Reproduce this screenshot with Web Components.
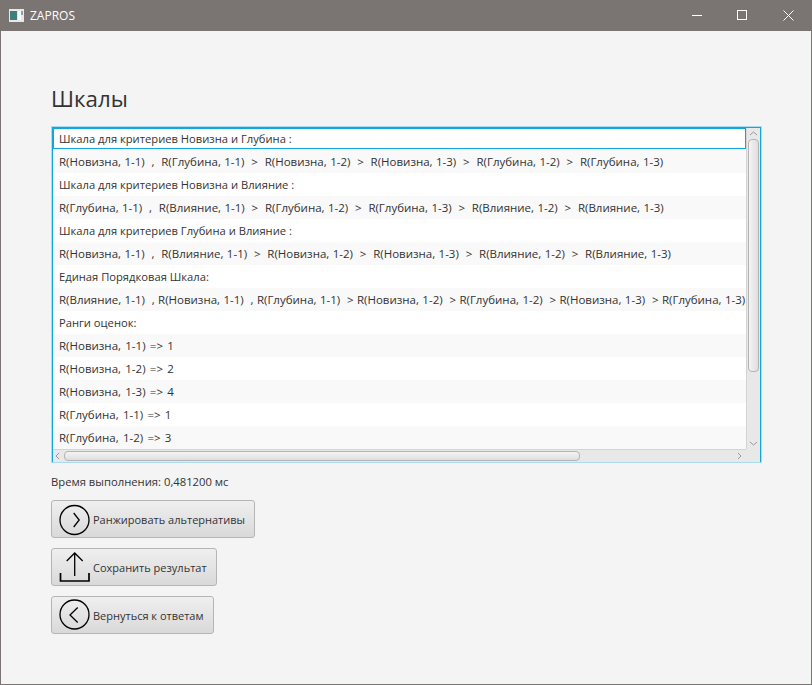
<!DOCTYPE html>
<html>
<head>
<meta charset="utf-8">
<title>ZAPROS</title>
<style>
html, body { margin: 0; height: 100%; }
body { width: 812px; height: 685px; overflow: hidden; font-family: "Open Sans", "Noto Sans", sans-serif; }
</style>
</head>
<body>
<app-window caption="ZAPROS">
  <scale-list>
    <list-row focused>Шкала для критериев Новизна и Глубина :</list-row>
    <list-row spaced>R(Новизна, 1-1)&nbsp; ,&nbsp; R(Глубина, 1-1)&nbsp; &gt;&nbsp; R(Новизна, 1-2)&nbsp; &gt;&nbsp; R(Новизна, 1-3)&nbsp; &gt;&nbsp; R(Глубина, 1-2)&nbsp; &gt;&nbsp; R(Глубина, 1-3)</list-row>
    <list-row>Шкала для критериев Новизна и Влияние :</list-row>
    <list-row spaced>R(Глубина, 1-1)&nbsp; ,&nbsp; R(Влияние, 1-1)&nbsp; &gt;&nbsp; R(Глубина, 1-2)&nbsp; &gt;&nbsp; R(Глубина, 1-3)&nbsp; &gt;&nbsp; R(Влияние, 1-2)&nbsp; &gt;&nbsp; R(Влияние, 1-3)</list-row>
    <list-row>Шкала для критериев Глубина и Влияние :</list-row>
    <list-row spaced>R(Новизна, 1-1)&nbsp; ,&nbsp; R(Влияние, 1-1)&nbsp; &gt;&nbsp; R(Новизна, 1-2)&nbsp; &gt;&nbsp; R(Новизна, 1-3)&nbsp; &gt;&nbsp; R(Влияние, 1-2)&nbsp; &gt;&nbsp; R(Влияние, 1-3)</list-row>
    <list-row>Единая Порядковая Шкала:</list-row>
    <list-row spaced>R(Влияние, 1-1)&nbsp; , R(Новизна, 1-1)&nbsp; , R(Глубина, 1-1)&nbsp; &gt; R(Новизна, 1-2)&nbsp; &gt; R(Глубина, 1-2)&nbsp; &gt; R(Новизна, 1-3)&nbsp; &gt; R(Глубина, 1-3)</list-row>
    <list-row>Ранги оценок:</list-row>
    <list-row rank>R(Новизна, 1-1) =&gt; 1</list-row>
    <list-row rank>R(Новизна, 1-2) =&gt; 2</list-row>
    <list-row rank>R(Новизна, 1-3) =&gt; 4</list-row>
    <list-row rank>R(Глубина, 1-1) =&gt; 1</list-row>
    <list-row rank>R(Глубина, 1-2) =&gt; 3</list-row>
  </scale-list>
  <span slot="status">Время выполнения: 0,481200 мс</span>
  <fx-button slot="actions" icon="next">Ранжировать альтернативы</fx-button>
  <fx-button slot="actions" icon="upload">Сохранить результат</fx-button>
  <fx-button slot="actions" icon="back">Вернуться к ответам</fx-button>
</app-window>
<script>
class AppWindow extends HTMLElement {
  constructor() {
    super()
    const shadow = this.attachShadow({ mode: "open" })
    shadow.innerHTML = `
      <style>
        :host {
          display: flex;
          flex-direction: column;
          box-sizing: border-box;
          width: 812px;
          height: 685px;
          border: 1px solid #7a7472;
          border-top: none;
          background: #f4f4f4;
          font-family: "Open Sans", "Noto Sans", sans-serif;
          color: #333;
        }
        .bar {
          display: flex;
          align-items: center;
          height: 31px;
          margin: 0 -1px;
          background: #7a7472;
          color: #fff;
          font-size: 12px;
        }
        .app-icon { margin: 0 6px 0 9px; }
        .caption { flex: 1; }
        .ctl { width: 45px; height: 31px; display: flex; align-items: center; justify-content: center; }
        .ctl:last-child { width: 47px; }
        main { display: flex; flex-direction: column; padding: 50px 49px 0 50px; }
        h1 { margin: 0; height: 45px; font-size: 22.3px; font-weight: 400; line-height: 36px; color: #333; }
        .status { font-size: 11.25px; line-height: 16px; margin: 11px 0 10px; color: #333; }
        .actions { display: flex; flex-direction: column; align-items: flex-start; gap: 10px; }
      </style>
      <div class="bar">
        <svg class="app-icon" width="15" height="13" viewBox="0 0 15 13">
          <rect width="15" height="13" fill="#e8e8e8"/>
          <rect x="1" y="2" width="7" height="9" fill="#3f7f7a"/>
          <rect x="9" y="2" width="3" height="9" fill="#fff"/>
          <rect x="12" y="2" width="2" height="4" fill="#8fa0a8"/>
        </svg>
        <span class="caption">${this.getAttribute("caption")}</span>
        <div class="ctl"><svg width="11" height="11"><path d="M0 5.5h10" stroke="#fff" fill="none"/></svg></div>
        <div class="ctl"><svg width="11" height="11"><rect x=".5" y=".5" width="9" height="9" stroke="#fff" fill="none"/></svg></div>
        <div class="ctl"><svg width="11" height="11"><path d="M.5 .5l10 10M10.5 .5l-10 10" stroke="#fff" fill="none"/></svg></div>
      </div>
      <main>
        <h1>Шкалы</h1>
        <slot></slot>
        <div class="status"><slot name="status"></slot></div>
        <div class="actions"><slot name="actions"></slot></div>
      </main>
    `
  }
}
customElements.define("app-window", AppWindow)

class ScaleList extends HTMLElement {
  constructor() {
    super()
    const shadow = this.attachShadow({ mode: "open" })
    shadow.innerHTML = `
      <style>
        :host {
          display: grid;
          grid-template-columns: 1fr 14px;
          grid-template-rows: 321px 13px;
          box-sizing: border-box;
          width: 711px;
          height: 337px;
          border: 2px solid #0fa8dc;
          outline: 1px solid #a8dcee;
          outline-offset: -1px;
          background: #fff;
        }
        .rows { overflow: hidden; min-width: 0; }
        .sb { background: #e8e8e8; display: flex; align-items: center; }
        .v { flex-direction: column; border-left: 1px solid #d4d4d4; }
        .h { border-top: 1px solid #d4d4d4; }
        .thumb { box-sizing: border-box; border: 1px solid #b4b4b4; border-radius: 4px; background: linear-gradient(90deg, #f4f4f4, #dedede); }
        .v .thumb { width: 11px; height: 233px; margin-top: 0; }
        .h .thumb { height: 10px; width: 516px; margin-left: 1px; background: linear-gradient(#f4f4f4, #dedede); }
        .arrow { flex: none; display: block; }
        .gap { flex: 1; }
        .corner { background: #e8e8e8; }
      </style>
      <div class="rows"><slot></slot></div>
      <div class="sb v">
        <svg class="arrow" width="13" height="11"><path d="M3 7l3.5-3 3.5 3" stroke="#999" fill="none"/></svg>
        <div class="thumb"></div>
        <div class="gap"></div>
        <svg class="arrow" width="13" height="11"><path d="M3 4l3.5 3 3.5-3" stroke="#999" fill="none"/></svg>
      </div>
      <div class="sb h">
        <svg class="arrow" width="10" height="12"><path d="M6 3L3 6l3 3" stroke="#999" fill="none"/></svg>
        <div class="thumb"></div>
        <div class="gap"></div>
        <svg class="arrow" width="12" height="12"><path d="M4 3l3 3-3 3" stroke="#999" fill="none"/></svg>
      </div>
      <div class="corner"></div>
    `
    this.querySelectorAll("list-row").forEach((row, i) => {
      if (i % 2) row.setAttribute("odd", "")
    })
  }
}
customElements.define("scale-list", ScaleList)

class ListRow extends HTMLElement {
  constructor() {
    super()
    const shadow = this.attachShadow({ mode: "open" })
    shadow.innerHTML = `
      <style>
        :host {
          display: block;
          box-sizing: border-box;
          height: 23px;
          padding: 0 6px;
          font-size: 11.2px;
          line-height: 23px;
          white-space: nowrap;
          background: #fff;
          color: #333;
        }
        :host([odd]) { background: #f9f9f9; }
        :host([spaced]) { font-size: 11.5px; word-spacing: .42px; }
        :host([rank]) { font-size: 11.5px; word-spacing: 1.3px; }
        :host([focused]) { position: relative; height: 22px; line-height: 21px; }
        :host([focused])::after {
          content: "";
          position: absolute;
          inset: 0 0 1px 0;
          border: 1px solid #0fa8dc;
        }
      </style>
      <slot></slot>
    `
  }
}
customElements.define("list-row", ListRow)

const BUTTON_ICONS = {
  next: `<circle cx="14.5" cy="16" r="14.5" fill="none" stroke="#000" stroke-width="1.3"/><path d="M13.7 9l5.5 7-5.5 7" fill="none" stroke="#000" stroke-width="1.3"/>`,
  back: `<circle cx="14.5" cy="14.5" r="14.5" fill="none" stroke="#000" stroke-width="1.3"/><path d="M17.7 7.5L10 15l7.7 7.5" fill="none" stroke="#000" stroke-width="1.3"/>`,
  upload: `<path d="M14.7 24V1M6.7 9l8-8 8 8" fill="none" stroke="#000" stroke-width="1.3"/><path d="M.5 21v8h28.5v-8" fill="none" stroke="#000" stroke-width="1.7"/>`
}

class FxButton extends HTMLElement {
  constructor() {
    super()
    const shadow = this.attachShadow({ mode: "open" })
    shadow.innerHTML = `
      <style>
        :host {
          display: flex;
          align-items: center;
          gap: 2px;
          box-sizing: border-box;
          width: max-content;
          height: 38px;
          padding: 0 9px 0 8px;
          border: 1px solid #b5b5b5;
          border-radius: 3px;
          background: linear-gradient(#efefef, #d9d9d9);
          font-size: 11px;
          color: #333;
        }
        svg { flex: none; display: block; overflow: visible; }
      </style>
      <svg width="31" height="31" viewBox="0 0 31 31">${BUTTON_ICONS[this.getAttribute("icon")]}</svg>
      <slot></slot>
    `
  }
}
customElements.define("fx-button", FxButton)
</script>
</body>
</html>
